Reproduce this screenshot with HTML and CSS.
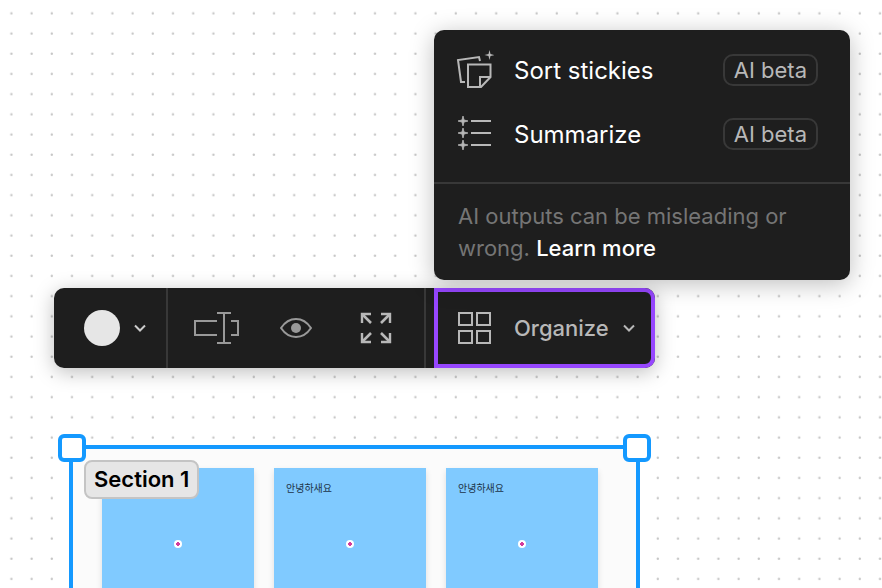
FILE: index.html
```html
<!DOCTYPE html>
<html lang="en">
<head>
<meta charset="utf-8">
<title>Board</title>
<link rel="stylesheet" href="styles.css">
</head>
<body>
<main class="board">
  <svg class="grid" aria-hidden="true">
    <defs>
      <pattern id="dots" width="101" height="101" patternUnits="userSpaceOnUse" patternTransform="translate(1 3) scale(.2)">
        <circle cx="52" cy="52" r="6" fill="#c6c6c6"/>
      </pattern>
    </defs>
    <rect width="100%" height="100%" fill="url(#dots)"/>
  </svg>

  <section class="section">
    <span class="handle handle-left"></span>
    <span class="handle handle-right"></span>
    <h2 class="section-title">Section 1</h2>
    <article class="sticky"><p class="note"></p><svg class="stamp" viewBox="0 0 8 8"><circle cx="4" cy="4" r="4"/><path d="M4 2v4M2 4h4"/></svg></article>
    <article class="sticky"><p class="note" lang="ko">안녕하새요</p><svg class="stamp" viewBox="0 0 8 8"><circle cx="4" cy="4" r="4"/><path d="M4 2v4M2 4h4"/></svg></article>
    <article class="sticky"><p class="note" lang="ko">안녕하새요</p><svg class="stamp" viewBox="0 0 8 8"><circle cx="4" cy="4" r="4"/><path d="M4 2v4M2 4h4"/></svg></article>
  </section>

  <div class="toolbar" role="toolbar" aria-label="Section tools">
    <button class="tool color" aria-label="Color">
      <span class="swatch"></span>
      <svg width="12" height="8" viewBox="0 0 12 8"><path d="M1 1.5 6 6.5 11 1.5" stroke-width="2"/></svg>
    </button>
    <div class="group">
      <button class="tool" aria-label="Rename">
        <svg width="46" height="32" viewBox="0 0 46 32" stroke-width="2"><path d="M23 9H1v14h22M37 9h7v14h-7M23 1h14M23 31h14M30 1v30"/></svg>
      </button>
      <button class="tool" aria-label="Hide contents">
        <svg width="32" height="20" viewBox="0 0 32 20" stroke-width="2"><path d="M1 10C5 4 10 1 16 1s11 3 15 9c-4 6-9 9-15 9S5 16 1 10Z"/><circle cx="16" cy="10" r="5" fill="currentColor" stroke="none"/></svg>
      </button>
      <button class="tool bright" aria-label="Fit to content">
        <svg width="32" height="32" viewBox="0 0 32 32"><path d="M11 2H2v9M21 2h9v9M11 30H2v-9M21 30h9v-9" stroke-width="2.4"/><path d="m2 2 9 9M30 2l-9 9M2 30l9-9M30 30l-9-9" stroke-width="2.6"/></svg>
      </button>
    </div>
    <button class="tool organize" aria-haspopup="menu" aria-expanded="true">
      <svg width="34" height="32" viewBox="0 0 34 32" stroke-width="2"><path d="M1 1h13v12H1zM19 1h13v12H19zM1 19h13v12H1zM19 19h13v12H19z"/></svg>
      <span class="organize-label">Organize</span>
      <svg width="12" height="8" viewBox="0 0 12 8"><path d="M1 1.5 6 6.5 11 1.5" stroke-width="2"/></svg>
    </button>
  </div>

  <div class="menu">
    <div class="menu-items">
      <button class="menu-item">
        <svg width="38" height="40" viewBox="0 0 38 40" stroke-width="2"><path d="M24 11 23 7 2 10l3 22h4M12 14.500h22.500V27L25 37H12zM24 37V27h10"/><path d="m33.500 0 1 4 4 1-4 1-1 4-1-4-4-1 4-1z" fill="currentColor" stroke="none"/></svg>
        <span class="menu-label">Sort stickies</span>
        <span class="badge">AI beta</span>
      </button>
      <button class="menu-item">
        <svg width="38" height="40" viewBox="0 0 38 40" stroke-width="2"><path d="M15 7h20M15 19h20M15 31h20"/><path d="m7 2 1 4 4 1-4 1-1 4-1-4-4-1 4-1zM7 14l1 4 4 1-4 1-1 4-1-4-4-1 4-1zM7 26l1 4 4 1-4 1-1 4-1-4-4-1 4-1z" fill="currentColor" stroke-width=".8"/></svg>
        <span class="menu-label">Summarize</span>
        <span class="badge">AI beta</span>
      </button>
    </div>
    <p class="disclaimer">AI outputs can be misleading or wrong. <a href="#learn">Learn more</a></p>
  </div>
</main>
</body>
</html>
```
FILE: styles.css
```css
* {
  box-sizing: border-box;
}

body {
  margin: 0;
  font-family: Inter, "Noto Sans CJK KR", sans-serif;
}

button {
  margin: 0;
  padding: 0;
  border: 0;
  background: none;
  color: inherit;
  font: inherit;
}

svg {
  flex: none;
  fill: none;
  stroke: currentColor;
}

.board {
  position: relative;
  height: 100vh;
  overflow: hidden;
  background: #fff;
}

.grid {
  position: absolute;
  inset: 0;
  width: 100%;
  height: 100%;
  stroke: none;
}

/* Selected section */
.section {
  position: absolute;
  top: 445px;
  left: 69px;
  display: flex;
  gap: 20px;
  padding: 19px 38px 40px 29px;
  border: 4px solid #1499ff;
  background: #fbfbfb;
}

.handle {
  position: absolute;
  top: -15px;
  width: 28px;
  height: 28px;
  border: 4px solid #1499ff;
  border-radius: 6px;
  background: #fff;
}

.handle-left {
  left: -15px;
}

.handle-right {
  right: -15px;
}

.section-title {
  position: absolute;
  top: 11px;
  left: 11px;
  margin: 0;
  padding: 0 8px;
  border: 2px solid #c4c4c4;
  border-radius: 8px;
  background: #e6e6e6;
  color: #000;
  font-size: 22px;
  font-weight: 600;
  line-height: 35px;
  white-space: nowrap;
}

.sticky {
  display: grid;
  grid-template-rows: 1fr auto 1fr;
  justify-items: center;
  width: 152px;
  height: 152px;
  padding: 12px;
  background: #80caff;
  box-shadow: 0 3px 6px rgba(0, 0, 0, .12);
}

.note {
  justify-self: start;
  margin: 0;
  color: #1c3348;
  font-size: 10px;
  line-height: 16px;
}

.stamp {
  width: 8px;
  height: 8px;
  fill: #fff;
  stroke: none;
}

.stamp path {
  stroke: #d43c9c;
  stroke-width: 2;
}

/* Toolbar */
.toolbar {
  position: absolute;
  top: 288px;
  left: 54px;
  display: flex;
  height: 80px;
  border-radius: 10px;
  background: #1e1e1e;
  color: #999;
  box-shadow: 0 4px 20px rgba(0, 0, 0, .26);
}

.tool {
  display: flex;
  align-items: center;
}

.color {
  gap: 14px;
  padding: 0 20px 0 30px;
  color: #ccc;
}

.swatch {
  width: 36px;
  height: 36px;
  border-radius: 50%;
  background: #e6e6e6;
}

.group {
  display: flex;
  gap: 40px;
  padding: 0 32px 0 26px;
  margin-right: 8px;
  border: solid #383838;
  border-width: 0 2px;
}

.bright {
  margin-left: 8px;
  color: #b8b8b8;
}

.organize {
  padding: 0 16px 0 20px;
  border: 4px solid #9747ff;
  border-radius: 0 10px 10px 0;
  color: #b8b8b8;
  font-size: 22px;
  font-weight: 500;
}

.organize-label {
  margin: 0 14px 0 22px;
}

/* Organize menu */
.menu {
  position: absolute;
  top: 30px;
  left: 434px;
  width: 416px;
  border-radius: 10px;
  background: #1e1e1e;
  color: #fff;
  box-shadow: 0 4px 24px rgba(0, 0, 0, .26);
}

.menu-items {
  padding: 8px 0 16px;
}

.menu-item {
  display: flex;
  align-items: center;
  width: 100%;
  height: 64px;
  padding: 0 32px 0 22px;
  font-size: 24px;
  text-align: left;
}

.menu-item svg {
  color: #b8b8b8;
}

.menu-label {
  flex: 1;
  margin-left: 20px;
}

.badge {
  padding: 0 9px;
  border: 2px solid #383838;
  border-radius: 10px;
  color: #b8b8b8;
  font-size: 22px;
  line-height: 28px;
}

.disclaimer {
  margin: 0;
  padding: 16px 24px;
  border-top: 2px solid #383838;
  color: #757575;
  font-size: 22px;
  line-height: 32px;
}

.disclaimer a {
  color: #fff;
  font-weight: 500;
  text-decoration: none;
}
```
